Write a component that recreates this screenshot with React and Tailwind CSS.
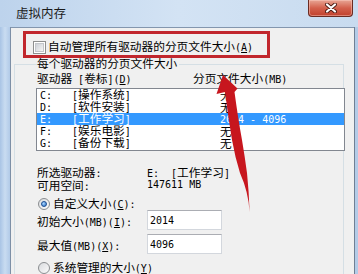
import React from 'react';

// half-width latin in the SimSun style dialog
function M({ children, className = '' }) {
  return <span className={"whitespace-pre font-['DejaVu_Sans_Mono',monospace] text-[10px] " + className}>{children}</span>;
}

function U({ children }) {
  return <span className="underline underline-offset-1">{children}</span>;
}

const drives = [
  { d: 'C:', label: '操作系统', size: '无' },
  { d: 'D:', label: '软件安装', size: '无' },
  { d: 'E:', label: '工作学习', size: '2014 - 4096', selected: true },
  { d: 'F:', label: '娱乐电影', size: '无' },
  { d: 'G:', label: '备份下载', size: '无' },
];

function Radio({ checked }) {
  return (
    <div className="flex h-[12px] w-[12px] items-center justify-center rounded-full border border-[#8a8d90] bg-gradient-to-br from-[#d9dbde] to-[#fbfbfb]">
      {checked && (
        <div className="h-[6px] w-[6px] rounded-full border border-[#1c4d92] bg-[radial-gradient(circle_at_35%_35%,#a9d6ff,#2a6fc4)]" />
      )}
    </div>
  );
}

function TextBox({ value }) {
  return (
    <div className="flex h-[20px] w-[75px] items-center border border-[#d3d7dd] border-t-[#abadb3] bg-white pl-[2px]">
      <M>{value}</M>
    </div>
  );
}

export default function App() {
  return (
    <div className="relative h-[274px] w-[358px] overflow-hidden bg-[#c3d8ee] font-['Noto_Sans_CJK_SC',sans-serif] text-[11.7px] text-black">
      {/* title bar */}
      <div className="flex h-[27px] items-start justify-between bg-gradient-to-r from-[#bdd3ec] via-[#d3e3f4] to-[#c8dbef] pl-[16px] pr-[5px]">
        <span className="mt-[5px] text-[12.5px] leading-[16px] text-[#1b1b1b]">虚拟内存</span>
        <div className="flex h-[17px] w-[45px] items-center justify-center rounded-b-[4px] border border-t-0 border-[#6a2b22] bg-gradient-to-b from-[#e7a595] via-[#d3604c] to-[#c0402c] shadow-[inset_0_0_0_1px_rgba(255,210,200,0.45)]">
          <svg width="12" height="10" viewBox="0 0 12 10">
            <path d="M2 1.5 L10 8.5 M10 1.5 L2 8.5" stroke="#4a1a12" strokeWidth="4" strokeLinecap="round" />
            <path d="M2 1.5 L10 8.5 M10 1.5 L2 8.5" stroke="#ffffff" strokeWidth="2.2" strokeLinecap="round" />
          </svg>
        </div>
      </div>

      <div className="flex h-[247px]">
        <div className="w-[11px] border-r border-[#7d8fa6] bg-gradient-to-r from-[#a9c4e5] via-[#c9dcf1] to-[#b1cae8]" />

        {/* client area */}
        <div className="relative w-[343px] border-t border-[#8396ae] bg-[#f0f0f0] pt-[12px]">
          <div className="flex h-[14px] items-center pl-[22px] leading-[14px]">
            <div className="flex h-[13px] w-[13px] items-center justify-center border border-[#8e8f8f] bg-white">
              <div className="h-[9px] w-[9px] border border-[#c3c6cb] bg-gradient-to-br from-[#cdd1d7] to-[#f5f5f5]" />
            </div>
            <span className="ml-[2px]">
              自动管理所有驱动器的分页文件大小<M>(<U>A</U>)</M>
            </span>
          </div>

          {/* group box */}
          <div className="relative ml-[3px] mt-[10px] h-[220px] w-[330px] border border-b-0 border-[#d5dfe5] pl-[21px] pt-[6px]">
            <span className="absolute left-[22px] top-[-9px] bg-[#f0f0f0] pr-[2px] leading-[13px]">每个驱动器的分页文件大小</span>

            <div className="ml-[1px] flex h-[14px] leading-[14px]">
              <span className="w-[156px]">
                驱动器<M> [</M>卷标<M>](<U>D</U>)</M>
              </span>
              <span>
                分页文件大小<M>(MB)</M>
              </span>
            </div>

            <div className="mt-[3px] w-[309px] border border-[#828790] bg-white pb-[1px]">
              {drives.map((r) => (
                <div
                  key={r.d}
                  className={
                    r.selected
                      ? 'flex h-[12px] items-center bg-[#3399ff] pl-[3px] leading-[12px] text-white'
                      : 'flex h-[12px] items-center pl-[3px] leading-[12px]'
                  }
                >
                  <span className="w-[32px]"><M>{r.d}</M></span>
                  <span className="w-[148px]">
                    <M>[</M>{r.label}<M>]</M>
                  </span>
                  <span>{r.size === '无' ? '无' : <M>{r.size}</M>}</span>
                </div>
              ))}
            </div>

            <div className="ml-[1px] mt-[14px] flex h-[13px] leading-[13px]">
              <span className="w-[110px]">所选驱动器<M>:</M></span>
              <span>
                <M>{'E:  ['}</M>工作学习<M>]</M>
              </span>
            </div>
            <div className="ml-[1px] flex h-[13px] leading-[13px]">
              <span className="w-[110px]">可用空间<M>:</M></span>
              <M>147611 MB</M>
            </div>

            <div className="ml-[2px] mt-[7px] flex h-[12px] items-center leading-[12px]">
              <Radio checked />
              <span className="ml-[3px]">
                自定义大小<M>(<U>C</U>):</M>
              </span>
            </div>
            <div className="ml-[1px] flex h-[20px] items-center">
              <span className="mt-[2px] w-[110px]">
                初始大小<M>(MB)(<U>I</U>):</M>
              </span>
              <TextBox value="2014" />
            </div>
            <div className="ml-[1px] mt-[4px] flex h-[20px] items-center">
              <span className="mt-[2px] w-[110px]">
                最大值<M>(MB)(<U>X</U>):</M>
              </span>
              <TextBox value="4096" />
            </div>
            <div className="ml-[2px] mt-[8px] flex h-[12px] items-center leading-[12px]">
              <Radio />
              <span className="ml-[3px]">
                系统管理的大小<M>(<U>Y</U>)</M>
              </span>
            </div>
          </div>

          {/* annotation box */}
          <div className="absolute left-[12px] top-[3px] h-[27px] w-[247px] border-[3px] border-[#c1272d]" />
        </div>

        <div className="w-[4px] border-l border-[#6f7f93] bg-[#b3cbe7]" />
      </div>

      {/* annotation arrow */}
      <svg className="pointer-events-none absolute left-0 top-0" width="358" height="274" viewBox="0 0 358 274">
        <path
          d="M223 75 L237.5 88.5 L234.5 92 Q238 118 242 140 Q245 158 247 173 Q249 192 249.6 212 Q248.5 192 240 173 Q235 157 232 140 Q228 116 225 92 L216.5 94 Z"
          fill="#c7161e"
        />
      </svg>
    </div>
  );
}
